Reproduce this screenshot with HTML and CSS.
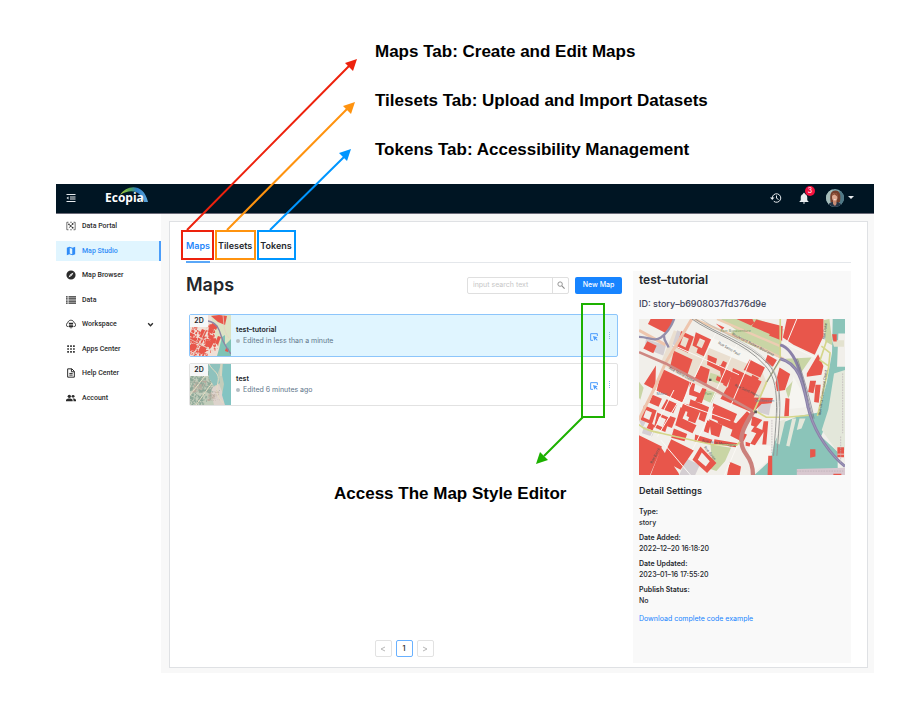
FILE: index.html
```html
<!DOCTYPE html>
<html lang="en">
<head>
<meta charset="utf-8">
<title>Ecopia Map Studio</title>
<link rel="stylesheet" href="styles.css">
</head>
<body>
<svg class="defs" aria-hidden="true">
  <defs>
    <symbol id="edit" viewBox="0 0 24 24"><path d="M22 9V2H2v20h7" fill="none" stroke="currentColor" stroke-width="3"/><path d="M9 9l14 4-5 3 5 5-2 2-5-5-3 5z" fill="currentColor"/></symbol>
    <symbol id="dots" viewBox="0 0 2 8"><path d="M0 0h1v1H0zM0 2h1v1H0zM0 4h1v1H0zM0 6h1v1H0z" fill="currentColor"/></symbol>
    <g id="blocks">
      <path d="M60 26h72l-12 22-16 20-52-27zM50 93l28 14-10 22-30-14z"/>
      <path fill-rule="evenodd" d="M152 62l38 18-18 48-34-16zM158 78l-9 26 16 8 10-26z"/>
      <path fill-rule="evenodd" d="M196 66l46 22-22 50-22-10 4-14-16-8zM208 84l-10 22 16 8 10-22z"/>
      <path d="M130 122l56 26-16 48-52-24zM94 176l84 40-22 62-78-36zM76 166l-36 56 34 18zM210 166l28 12-10 44-36-16zM232 134l28 12-4 16 14 6 8-16 12 6-12 30-48-24zM266 164l38 20-18 40-30-14 4-12 12 4zM308 174l86 40-26 54-76-34zM290 232l86 38-14 36-92-40zM358 148l46 24-14 30-50-22zM378 28l80 20-6 38-88-38zM470 26h110v52l-26 56-64-30-32-22zM412 134l28 16-12 20-24-14zM448 172l32 20-16 48-24 4-4-26zM530 190l34-58 16 36-6 26-44 6zM540 212h18l-8 38-16-4zM556 224h16l-6 54-14-2zM466 264l12 2-2 52-14 2z"/>
      <path fill-rule="evenodd" d="M40 286l38 16-14 42-34-14zM46 300l-8 22 18 8 8-22z"/>
      <path fill-rule="evenodd" d="M80 308l38 16-14 42-34-14zM86 320l-8 24 18 8 10-24z"/>
      <path d="M66 254l28 12-10 24-28-12zM108 268l32 14-12 28-36-14zM178 216l16 6-4 20 18 8 8-16 12 4-14 42-20-6 6-12-24-8zM180 268l56 24-14 44-18-8 6-20-16-6-10 24-16-8zM150 292l18 6-12 28 42 20-12 24-52-24zM248 280l72 32-16 38-60-24zM236 328l40 18-10 36-24-8zM330 262l98 2-4 16-30 2-22 22-48-20zM310 348l40-44 12 10-18 44-16 34-28-14zM366 318l30 12-18 22-16-6zM400 334h14l-6 70h-12l4-38-26 40-14-4 18-32-16-6 10-14 24 10zM346 396l14 4-2 10-12-2zM130 356l40 16-8 22-40-10zM194 374l52 16-6 12-48-8zM252 388l70 12-6 12-66-10z"/>
      <path d="M24 376l70 34-36 86H24zM122 388l68 34-40 58-56-30 14-32zM92 414l52 76 2 6H60z"/>
      <path fill-rule="evenodd" d="M210 410l48 50-28 30-44-40zM214 428l-12 22 24 20 12-16z"/>
      <path d="M298 456l34 14-4 26h-38zM414 438h12v58h-14zM622 412h20v20h-20zM540 418h16v22l-16 4zM606 72h14v22h-10zM610 492h24v4h-24z"/>
    </g>
  </defs>
</svg>

<ul class="notes">
  <li>Maps Tab: Create and Edit Maps</li>
  <li>Tilesets Tab: Upload and Import Datasets</li>
  <li>Tokens Tab: Accessibility Management</li>
</ul>

<div class="app">
  <header class="topbar">
    <button class="icon-button menu" aria-label="Collapse menu"><svg width="10" height="10" viewBox="0 0 20 20"><path d="M1 3h18M8 8h11M8 12h11M1 17h18" stroke="currentColor" stroke-width="2"/><path d="M1 10l4-3v6z" fill="currentColor"/></svg></button>
    <a class="logo" href="#"><svg class="arc" width="30" height="16" viewBox="0 0 30 16" aria-hidden="true"><defs><linearGradient id="sky"><stop offset="0" stop-color="#b5d03a"/><stop offset=".35" stop-color="#55a552"/><stop offset=".6" stop-color="#2b7cc4"/><stop offset="1" stop-color="#5fa8dc"/></linearGradient></defs><path d="M1 8C8-3 25-4 29 15h-4C22 4 12 1 1 8z" fill="url(#sky)"/></svg><span>Ecopia</span></a>
    <div class="tools">
      <button class="icon-button" aria-label="History"><svg width="12" height="12" viewBox="0 0 24 24"><path d="M4.500 12a8.500 8.500 0 1 1 3 6.500M13 7v5.500l4 2.500" fill="none" stroke="currentColor" stroke-width="2"/><path d="M0 11h9l-4.500 5z" fill="currentColor"/></svg></button>
      <button class="icon-button bell" aria-label="Notifications"><svg width="12" height="12" viewBox="0 0 24 24"><path d="M12 1.500c1 0 1.700.7 1.700 1.700v.7c3 .8 4.800 3.300 4.800 6.600v6l2.500 2.500v1H3v-1L5.500 16.500v-6c0-3.300 1.800-5.800 4.800-6.600v-.7c0-1 .7-1.700 1.700-1.700zM9.700 21h4.600a2.300 2.300 0 0 1-4.600 0z" fill="currentColor"/></svg><span class="badge">3</span></button>
      <button class="icon-button profile" aria-label="Profile"><svg width="18" height="18" viewBox="0 0 36 36"><defs><clipPath id="round"><circle cx="18" cy="18" r="18"/></clipPath></defs><g clip-path="url(#round)"><path d="M0 0h36v36H0z" fill="#7ea6ae"/><path d="M0 0h13v36H0z" fill="#a5bcb9"/><path d="M27 0h9v36h-9z" fill="#4f7886"/><path d="M9 25c-2-15 1-22 10-22s11 8 9 22l-4 4H12z" fill="#753f2d"/><path d="M4 36c0-8 5-10 13-10s14 2 15 10z" fill="#263548"/><path d="M14 22h7v8l-3 4-4-4z" fill="#c98d76"/><ellipse cx="17.500" cy="16" rx="5.500" ry="8" fill="#dfaa93"/><path d="M11 14c1-6 9-8 12-3l1 6c-2-3-5-5-7-6z" fill="#8c4d35"/><path d="M15 20q3 3 5 0z" fill="#fff"/></g></svg><svg width="6" height="4" viewBox="0 0 6 4"><path d="M0 0h6L3 3z" fill="currentColor"/></svg></button>
    </div>
  </header>

  <div class="body">
    <nav class="sidebar">
      <a href="#"><svg viewBox="0 0 24 24"><path d="M6 3H2v18h4M18 3h4v18h-4M10 3h4M10 21h4" fill="none" stroke="currentColor" stroke-width="1.600"/><path d="M7 8l4 4 5-5M7 17l4-5 5 4" fill="none" stroke="currentColor" stroke-width="1.400"/><circle cx="7" cy="8" r="2"/><circle cx="11" cy="12" r="2"/><circle cx="16" cy="7" r="2"/><circle cx="16" cy="16" r="2"/></svg>Data Portal</a>
      <a href="#" class="active"><svg viewBox="0 0 24 24"><path fill-rule="evenodd" d="M2 4l6-2 8 2 6-2v18l-6 2-8-2-6 2zM9 5v13l6 1.500V6.500z"/></svg>Map Studio</a>
      <a href="#"><svg viewBox="0 0 24 24"><path fill-rule="evenodd" d="M12 1a11 11 0 1 0 0 22 11 11 0 0 0 0-22zM18 6l-4 8-8 4 4-8z"/><circle cx="12" cy="12" r="1.300"/></svg>Map Browser</a>
      <a href="#"><svg viewBox="0 0 24 24"><path d="M0 3h4v3H0zM6 3h18v3H6zM0 8h4v3H0zM6 8h18v3H6zM0 13h4v3H0zM6 13h18v3H6zM0 18h4v3H0zM6 18h18v3H6z"/></svg>Data</a>
      <a href="#"><svg viewBox="0 0 24 24"><path d="M6 18H5A4 4 0 0 1 4 10C5 1 18 0 20 10a4 4 0 0 1-1 8h-1" fill="none" stroke="currentColor" stroke-width="2"/><path d="M7 9h10v3H7zM7 13h10v3H7zM7 17h10v3H7zM11 20h2v3h-2z"/></svg>Workspace<svg class="chevron" viewBox="0 0 12 12"><path d="M2 4l4 4 4-4" fill="none" stroke="currentColor" stroke-width="2.400"/></svg></a>
      <a href="#"><svg viewBox="0 0 24 24"><path d="M3 3h4v4H3zM10 3h4v4h-4zM17 3h4v4h-4zM3 10h4v4H3zM10 10h4v4h-4zM17 10h4v4h-4zM3 17h4v4H3zM10 17h4v4h-4zM17 17h4v4h-4z"/></svg>Apps Center</a>
      <a href="#"><svg viewBox="0 0 24 24"><path d="M4 2h10l6 6v14H4zM13 2v7h7M8 13h8M8 17h8" fill="none" stroke="currentColor" stroke-width="2.400"/></svg>Help Center</a>
      <a href="#"><svg viewBox="0 0 24 24"><circle cx="8" cy="8" r="4"/><circle cx="17" cy="8" r="3.500"/><path d="M0 20v-3c0-5 16-5 16 0v3zM18 20v-3c0-2-1-3-2-4 4 0 8 1 8 4v3z"/></svg>Account</a>
    </nav>

    <main class="content">
      <section class="card">
        <div class="tabs" role="tablist">
          <button role="tab" class="tab selected" aria-selected="true">Maps</button>
          <button role="tab" class="tab" aria-selected="false">Tilesets</button>
          <button role="tab" class="tab" aria-selected="false">Tokens</button>
        </div>
        <div class="columns">
          <div class="list">
            <div class="list-head">
              <h1>Maps</h1>
              <form class="search">
                <input type="search" placeholder="input search text" aria-label="Search maps">
                <button type="button" aria-label="Search"><svg width="8" height="8" viewBox="0 0 18 18"><circle cx="7" cy="7" r="5" fill="none" stroke="currentColor" stroke-width="2"/><path d="M11 11l6 6" stroke="currentColor" stroke-width="2.400"/></svg></button>
              </form>
              <button class="primary">New Map</button>
            </div>

            <article class="row chosen">
              <div class="thumb">
                <svg viewBox="0 0 41 41" preserveAspectRatio="none">
                  <path d="M0 0h41v41H0z" fill="#f0e0d6"/>
                  <path d="M21 0h20v41H31l-6-22z" fill="#dce3c4"/>
                  <path d="M29 34l3-12 3-2v10l6-6v17H27z" fill="#7fc3b5"/>
                  <g fill="#e8564a"><use href="#blocks" transform="translate(-5 8) scale(.052)"/><use href="#blocks" transform="translate(-3 22) scale(.05)"/><path d="M21 1l8-1 8 1-2 9-7-3zM28 21l3 1-3 8-3-2zM1 29l7 2-3 5-5-1zM16 25l8 2-3 6-6-2zM36 33l3 1-1 3-3-1zM12 14l5 2-2 4-5-2zM19 12l5 3-2 4-4-2zM2 22l5 2-2 4-5-2zM19 19l5 2-1 4-5-2zM22 8l6 3-2 4-5-3zM10 32l6 2-2 5-6-2z"/></g>
                  <path d="M18 6c12 2 12 14 15 20s5 9 8 13" fill="none" stroke="#8c85a5" stroke-width="1.400"/>
                  <path d="M0 24l23 12M3 41l15-31M33 0c1 8 0 16 6 23" fill="none" stroke="#e6cfc0" stroke-width=".8"/>
                </svg>
                <span class="tag">2D</span>
              </div>
              <div class="info"><h2>test–tutorial</h2><p><i></i>Edited in less than a minute</p></div>
              <button class="edit" aria-label="Edit style"><svg width="8" height="8"><use href="#edit"/></svg></button>
              <button class="more" aria-label="More"><svg width="2" height="8"><use href="#dots"/></svg></button>
            </article>

            <article class="row">
              <div class="thumb">
                <svg viewBox="0 0 41 41" preserveAspectRatio="none">
                  <path d="M0 0h41v41H0z" fill="#c3cdbb"/>
                  <path d="M20 24l9-4 4 10 2 11H24z" fill="#ddd3cc"/>
                  <g fill="#8da898"><use href="#blocks" transform="translate(-4 6) scale(.042)"/><use href="#blocks" transform="translate(8 12) scale(.034)"/><use href="#blocks" transform="translate(-4 24) scale(.044)"/></g>
                  <g fill="#b9aa9d"><use href="#blocks" transform="translate(2 16) scale(.025)"/><use href="#blocks" transform="translate(17 27) scale(.02)"/></g>
                  <path d="M18 0h13l-3 9 2 10-6 3-5-8z" fill="#8fc2bd"/>
                  <path d="M33 0h8v41h-6l-3-10 2-11-2-9z" fill="#83c4c2"/>
                  <path d="M19 0c4 8 11 8 9 18s-2 12 5 21M0 31l15-19M6 41l16-22M31 0v12" fill="none" stroke="#e6ddc3" stroke-width="1"/>
                </svg>
                <span class="tag">2D</span>
              </div>
              <div class="info"><h2>test</h2><p><i></i>Edited 6 minutes ago</p></div>
              <button class="edit" aria-label="Edit style"><svg width="8" height="8"><use href="#edit"/></svg></button>
              <button class="more" aria-label="More"><svg width="2" height="8"><use href="#dots"/></svg></button>
            </article>

            <div class="pages">
              <button aria-label="Previous page"><svg width="6" height="8" viewBox="0 0 6 8"><path d="M5 2L1 4l4 2" fill="none" stroke="currentColor"/></svg></button>
              <button class="current">1</button>
              <button aria-label="Next page"><svg width="6" height="8" viewBox="0 0 6 8"><path d="M1 2l4 2-4 2" fill="none" stroke="currentColor"/></svg></button>
            </div>
          </div>

          <aside class="details">
            <h2>test–tutorial</h2>
            <p class="id">ID: story–b6908037fd376d9e</p>
            <svg class="map" viewBox="25 26 620 470" preserveAspectRatio="xMidYMid slice" role="img" aria-label="Map preview">
              <path d="M25 26h620v470H25z" fill="#f1efea"/>
              <path d="M130 60l110 40 150 70 20 50-30 70-80-20-110-50-100-60z" fill="#eadfd0"/>
              <g fill="#c9d5a5">
                <path d="M270 26h110l80 30-10 60-95-30zM390 90l60 26v28l-90-40-70-30 30-16zM240 188l38 12-10 22-34-12zM466 146l78-4-30 44-30-20zM492 208l4 22-22 34-8-26zM25 215l14 18-10 36-4-6zM240 404l62 10-18 40-26 30-30-10 16-28zM580 30l18-4 10 80-22-12zM215 236l42 12-14 32-34-16z"/>
              </g>
              <path d="M238 80l165 68-30 22-140-58zM490 200l50 90-70 8zM352 400l70 8v36l-56 50z" fill="#f6f5f1"/>
              <path d="M386 276l36 6-6 34-34-10zM168 446l40 20-14 30h-48zM25 330l20 6-10 20zM46 86l60 20-8 30-56-22zM40 350l30 16-6 14-30-10zM140 60l14 6-18 50-12-6z" fill="#d4ced2"/>
              <path d="M608 26h37v44h-20l-4 100h24v20h-24l-20 120-28 70 50 46v70H372l50-46 10-50 30-64 44-18 60-10 24-90 16-90z" fill="#8bc4b9"/>
              <path d="M448 334l18-6-18 76-10-4zM486 326h12l-20 84-10-2zM508 326h18l-12 30-14 4zM612 190l33-10v240l-20 10-36-50-14-20 20-62z" fill="#e3e7da"/>
              <path d="M500 478l145-4v22H500z" fill="#d9c8d0"/>
              <path d="M606 90h36v20h-30z" fill="#e3e2cf"/>
              <g fill="#e8564b"><use href="#blocks"/><path d="M318 26h48l6 12-10 8zM256 40l26 12-6 6zM434 50l22 8v34l-40-16zM296 184l12 4-20 42-10-6zM158 280l22 6-8 20-20-8zM262 316l60 26-10 20-50-22zM186 296l22 10-14 34-22-8zM118 318l18 6-12 30-16-6zM366 194l20 10-14 30-20-8zM230 330l12 6-8 34-14-6zM56 338l16 8-6 16-18-8zM622 434h20v8h-20zM340 370l10 4-10 20-8-4z"/></g>
              <g fill="none" stroke="#faf8f4" stroke-width="3">
                <path d="M126 120l60-90M150 290l110-230M60 380l70-140M240 280l90-200M300 290l60-140M60 236l110 50 130 46M126 104l200 90M80 380l60-100M186 420l64-130M90 390l90 106M282 496l40-92M456 96l100 46M500 26l-30 72"/>
              </g>
              <path d="M190 26l175 74 95 46" fill="none" stroke="#eccbb0" stroke-width="7"/>
              <path d="M260 26l190 82" fill="none" stroke="#edcdb2" stroke-width="7"/>
              <path d="M184 26l-80 134-30 70-50 100M25 60l80 44" fill="none" stroke="#eec5ad" stroke-width="9"/>
              <path d="M25 126l80 34 150 80 110 62" fill="none" stroke="#ce8781" stroke-width="8"/>
              <path d="M370 304c-30 46-54 88-22 130q20 26 20 62" fill="none" stroke="#cb817c" stroke-width="13"/>
              <path d="M25 344c20 22 70 24 110 36l110 24 74 2 10-10M378 304l30 18h60l70-6M410 214l-40 92M450 26v124l-44 70M590 90l-20 60 26 18 4-40-26-20M596 170l-20 90-14 58" fill="none" stroke="#d5d68b" stroke-width="5"/>
              <g fill="none" stroke="#969795" stroke-width="3">
                <path d="M184 26c60 44 160 70 220 140 50 50 34 150 26 272"/>
                <path d="M194 26c60 44 160 70 220 136 50 56 34 154 26 276"/>
                <path d="M450 146l-40 70" stroke="#898b8a"/>
              </g>
              <path d="M212 26c60 44 150 70 206 136 38 50 26 90 22 160" fill="none" stroke="#b5b5b2" stroke-width="2"/>
              <path d="M25 80c30 0 46 16 66 2s30-30 40-56M100 76c0 18 10 22 14 36" fill="none" stroke="#938eab" stroke-width="7"/>
              <path d="M450 146c70 16 72 110 90 168s60 120 105 156M450 104c50 14 70 110 84 190" fill="none" stroke="#8a81a9" stroke-width="9"/>
              <path d="M450 146c70 16 72 110 90 168s60 120 105 156" fill="none" stroke="#a9a1c0" stroke-width="2"/>
              <path d="M498 146c20 60 40 130 50 180M502 146c20 60 40 130 50 180" fill="none" stroke="#777687" stroke-width="2"/>
              <path d="M638 190v180M632 380v80M500 484h140M425 330v100" fill="none" stroke="#b9aeb4" stroke-width="2" stroke-dasharray="5 3"/>
              <g class="map-text">
                <text x="270" y="64" fill="#6e8f5b">Parc Bonaventure</text>
                <text transform="translate(304 74) rotate(27)">Boulevard Robert-Bourassa</text>
                <text transform="translate(262 100) rotate(30)">Rue Saint-Paul</text>
                <text transform="translate(114 176) rotate(28)">Rue Notre-Dame</text>
                <text transform="translate(312 228) rotate(25)">Rue Saint-Henri</text>
                <text transform="translate(214 396) rotate(8)">Rue de la Montagne</text>
                <text transform="translate(64 462) rotate(-62)">Rue Barré</text>
                <text transform="translate(220 412) rotate(52)">Rue Basin</text>
                <text transform="translate(572 316) rotate(-82)">Rue de la Commune Ouest</text>
                <text transform="translate(584 88) rotate(-82)">Rue Duke</text>
                <text x="78" y="256" fill="#61839b">Métro</text>
                <text x="222" y="256" fill="#6e8f5b">Parc</text>
                <text x="374" y="276" fill="#61839b">Griffintown</text>
              </g>
              <path d="M236 206h7v7h-7zM372 302h8v8h-8z" fill="#555"/>
            </svg>
            <h3>Detail Settings</h3>
            <dl>
              <dt>Type:</dt><dd>story</dd>
              <dt>Date Added:</dt><dd>2022–12–20 16:18:20</dd>
              <dt>Date Updated:</dt><dd>2023–01–16 17:55:20</dd>
              <dt>Publish Status:</dt><dd>No</dd>
            </dl>
            <a href="#">Download complete code example</a>
          </aside>
        </div>
      </section>
    </main>
  </div>
</div>

<svg class="marks" width="922" height="708" viewBox="0 0 922 708" aria-hidden="true">
  <g fill="none" stroke-width="2">
    <path stroke="#ed220d" d="M182 231h31v28h-31zM187 230L350 65"/>
    <path stroke="#ff930f" d="M216 231h39v28h-39zM227 230L348 108"/>
    <path stroke="#0096ff" d="M258 231h37v28h-37zM270 230l74-73"/>
    <path stroke="#1db100" d="M582 304h22v113h-22zM583 417l-39 39"/>
  </g>
  <path d="M357 59l-4 12-8-8z" fill="#ed220d"/>
  <path d="M355 102l-4 12-8-8z" fill="#ff930f"/>
  <path d="M351 149l-4 12-8-8z" fill="#0096ff"/>
  <path d="M536 464l4-12 8 8z" fill="#1db100"/>
</svg>
<p class="style-note">Access The Map Style Editor</p>
</body>
</html>
```
FILE: styles.css
```css
* { box-sizing: border-box; }
body { margin: 0; background: #fff; color: #24272c; font: 8px/12px Inter, "Liberation Sans", sans-serif; position: relative; }
h1, h2, h3, p, ul, dl, dd { margin: 0; padding: 0; font-weight: 500; }
button { font: inherit; padding: 0; border: 0; background: none; color: inherit; cursor: pointer; }
a { color: inherit; text-decoration: none; }
svg { display: block; }
.defs { position: absolute; width: 0; height: 0; }

.notes { list-style: none; padding: 27px 0 10px 375px; color: #000; font: bold 17px/49px "Liberation Sans", Arial, sans-serif; }
.style-note { position: absolute; left: 334px; top: 482px; color: #000; font: bold 17px/24px "Liberation Sans", Arial, sans-serif; }
.marks { position: absolute; left: 0; top: 0; }

.app { margin: 0 48px 34px 56px; }
.topbar { height: 30px; display: flex; align-items: center; padding: 0 20px 2px 10px; background: #001523; color: #e8ecef; border-bottom: 1px solid #6b6b78; }
.icon-button { display: flex; align-items: center; position: relative; }
.logo { margin-left: 29px; position: relative; color: #fff; font: bold 12px/16px "Open Sans", sans-serif; }
.logo span { position: relative; }
.arc { position: absolute; left: 14px; top: -3px; }
.tools { margin-left: auto; display: flex; align-items: center; gap: 16px; }
.profile { gap: 4px; }
.badge { position: absolute; left: 7px; top: -6px; width: 10px; height: 10px; border-radius: 5px; background: #f5113f; color: #fff; font-size: 7px; line-height: 10px; text-align: center; }

.body { display: flex; }
.sidebar { width: 105px; height: 196px; display: grid; grid-auto-rows: 1fr; font: 500 7px/12px Roboto, sans-serif; }
.sidebar a { display: flex; align-items: center; gap: 6px; padding: 0 7px 0 10px; margin: 2px 0; color: #2b2b2b; }
.sidebar svg { width: 10px; height: 10px; fill: currentColor; }
.sidebar .chevron { width: 7px; height: 7px; margin-left: auto; }
.sidebar .active { background: #e0f5ff; color: #2f8cf8; border-right: 2px solid #4b9dfa; }

.content { flex: 1; background: #f8f8f8; padding: 7px 6px 5px 8px; }
.card { background: #fff; border: 1px solid #dfe1e4; padding: 0 16px 4px; }
.tabs { display: flex; gap: 8px; height: 41px; padding-top: 8px; border-bottom: 1px solid #e4e7eb; }
.tab { height: 33px; font-size: 9px; font-weight: 600; line-height: 30px; border-bottom: 2px solid transparent; }
.tab.selected { color: #1f87fb; border-color: #5aa7f8; }
.columns { display: flex; gap: 11px; padding-top: 8px; }
.list { flex: 1; display: flex; flex-direction: column; min-width: 0; }
.list-head { display: flex; align-items: center; height: 28px; margin-bottom: 15px; }
.list-head h1 { flex: 1; font-size: 18px; line-height: 24px; font-weight: 600; }
.search { display: flex; height: 17px; width: 102px; margin-right: 6px; border: 1px solid #dfdfdf; border-radius: 2px; }
.search input { flex: 1; min-width: 0; border: 0; padding: 0 5px; font: 7px/12px Inter, sans-serif; background: none; }
.search input::placeholder { color: #c6c6c6; }
.search button { width: 16px; display: grid; place-items: center; border-left: 1px solid #dfdfdf; color: #888; }
.primary { width: 47px; height: 17px; border-radius: 2px; background: #1784ff; color: #fff; font-size: 7px; font-weight: 500; }

.row { display: flex; align-items: center; height: 43px; margin: 0 4px 6px 3px; padding-right: 6px; border: 1px solid #e2e2e2; border-radius: 2px; }
.row.chosen { background: #e0f5ff; border-color: #8cc5fb; }
.thumb { position: relative; width: 41px; height: 41px; margin-right: 5px; overflow: hidden; }
.thumb svg { width: 100%; height: 100%; }
.tag { position: absolute; left: 0; top: 0; width: 18px; height: 12px; background: #f6f7f7; font-size: 7px; font-weight: 600; text-align: center; }
.info { flex: 1; }
.info h2 { font-size: 7px; line-height: 11px; font-weight: 600; }
.info p { display: flex; align-items: center; gap: 3px; font-size: 7px; color: #60758a; font-weight: 400; }
.info i { width: 4px; height: 4px; border-radius: 2px; background: #b4bdc3; }
.edit { padding-top: 2px; color: #4d9dfc; }
.more { color: #91b9e0; margin-left: 11px; width: 2px; }
.pages { display: flex; justify-content: center; gap: 4px; margin-top: auto; margin-bottom: 6px; }
.pages button { width: 17px; height: 17px; display: grid; place-items: center; border: 1px solid #e2e2e2; border-radius: 2px; color: #b8b8b8; font-size: 7px; }
.pages .current { border-color: #69b1ff; color: #333; font-weight: 600; }

.details { width: 218px; padding: 0 6px 39px; background: #f9f9f9; font-size: 7px; line-height: 11px; }
.details h2 { font-size: 12px; line-height: 18px; font-weight: 600; }
.id { padding: 7px 0; font-size: 9px; line-height: 16px; color: #3b4058; }
.map { width: 100%; aspect-ratio: 206 / 156; }
.map-text { font: 11px "Noto Sans", sans-serif; fill: #555; }
.details h3 { padding: 9px 0 8px; font-size: 9px; line-height: 14px; font-weight: 600; }
.details dt { font-weight: 600; }
.details dd { margin-bottom: 4px; }
.details a { display: block; padding-top: 3px; color: #1784ff; }
```
